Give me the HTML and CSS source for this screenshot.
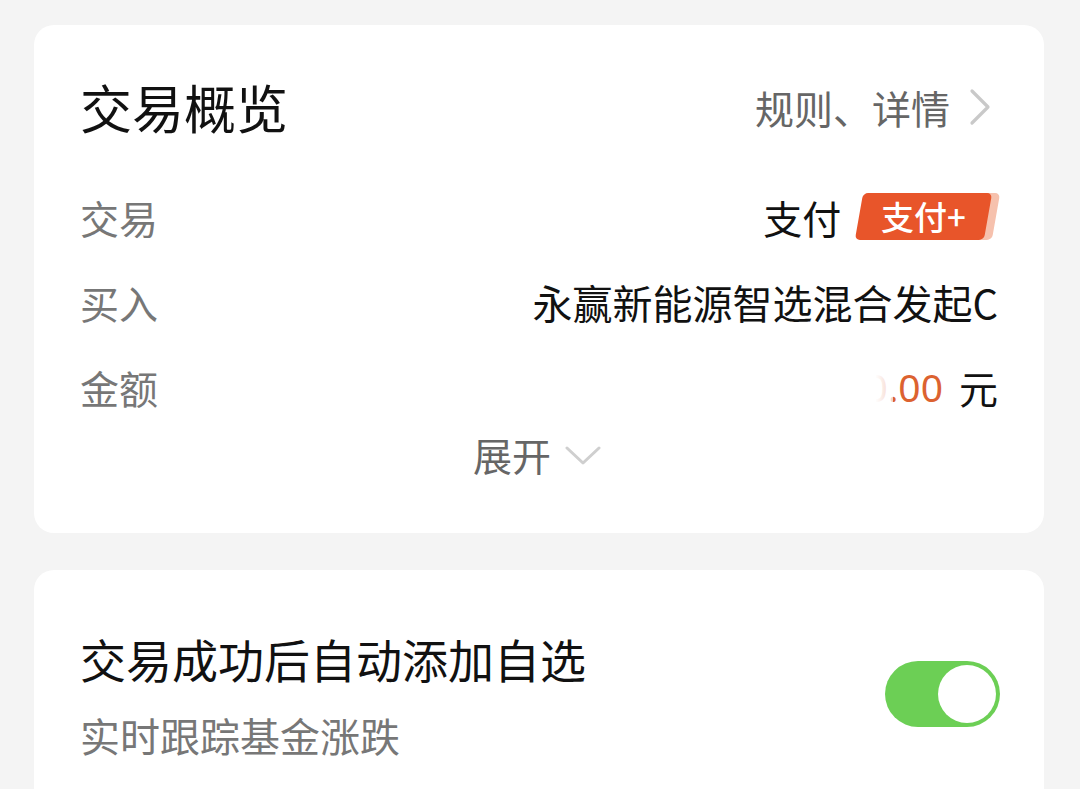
FILE: index.html
```html
<!DOCTYPE html>
<html lang="zh-CN">
<head>
    <meta charset="UTF-8">
    <meta name="viewport" content="width=device-width, initial-scale=1.0">
    <title>交易概览</title>
    <link rel="stylesheet" href="styles.css">
</head>
<body>
    <div class="page">
        <!-- 交易概览 -->
        <section class="card overview">
            <div class="card-head">
                <h1 class="card-title">交易概览</h1>
                <a class="head-link" href="#">规则、详情
                    <svg class="chev-right" viewBox="0 0 24 38" width="24" height="38">
                        <path d="M4 3 L20 19 L4 35" fill="none" stroke="#c9c9c9" stroke-width="3.2" stroke-linecap="round" stroke-linejoin="round"/>
                    </svg>
                </a>
            </div>

            <div class="row">
                <span class="label">交易</span>
                <span class="value">支付 <span class="badge"><span class="badge-text">支付+</span></span></span>
            </div>
            <div class="row">
                <span class="label">买入</span>
                <span class="value name">永赢新能源智选混合发起C</span>
            </div>
            <div class="row">
                <span class="label">金额</span>
                <span class="value"><span class="amount">10.00</span> 元</span>
            </div>

            <div class="expand">展开
                <svg class="chev-down" viewBox="0 0 36 22" width="36" height="22">
                    <path d="M2 3 L18 18 L34 3" fill="none" stroke="#cfcfcf" stroke-width="3" stroke-linecap="round" stroke-linejoin="round"/>
                </svg>
            </div>
        </section>

        <!-- 自动添加自选 -->
        <section class="card setting">
            <div class="setting-text">
                <div class="setting-title">交易成功后自动添加自选</div>
                <div class="setting-sub">实时跟踪基金涨跌</div>
            </div>
            <div class="switch on"><span class="knob"></span></div>
        </section>
    </div>
</body>
</html>
```

FILE: styles.css
```css
* {
    margin: 0;
    padding: 0;
    box-sizing: border-box;
}

body {
    background: #f4f4f4;
    font-family: "Noto Sans CJK SC", "Noto Sans", sans-serif;
    color: #111;
    overflow: hidden;
}

.page {
    padding: 25px 36px 0 34px;
    display: flex;
    flex-direction: column;
    gap: 37px;
}

.card {
    background: #fff;
    border-radius: 20px;
}

/* overview card */
.overview {
    padding: 52px 46px 54px 46px;
    display: flex;
    flex-direction: column;
}

.card-head {
    display: flex;
    justify-content: space-between;
    align-items: center;
    height: 60px;
    margin-bottom: 37px;
}

.card-title {
    font-size: 52px;
    font-weight: 400;
    line-height: 60px;
    color: #111;
}

.head-link {
    display: flex;
    align-items: center;
    gap: 18px;
    font-size: 39px;
    color: #666;
    text-decoration: none;
    margin-right: 6px;
}

.row {
    height: 85px;
    display: flex;
    justify-content: space-between;
    align-items: center;
    font-size: 39px;
}

.label {
    color: #777;
}

.value {
    display: flex;
    align-items: center;
    color: #111;
}

.value.name {
    font-size: 40px;
}

.badge {
    margin-left: 18px;
    display: inline-flex;
    align-items: center;
    height: 47px;
    padding: 0 22px 0 22px;
    background: #e8552a;
    border-radius: 5px;
    transform: skewX(-10deg);
    box-shadow: 8px 0 0 #f6c1ad;
    margin-right: 10px;
}

.badge-text {
    transform: skewX(10deg);
    color: #fff;
    font-size: 33px;
    font-weight: 500;
    line-height: 47px;
}

.amount {
    position: relative;
    color: #dc6230;
    font-family: "Noto Sans", sans-serif;
    margin-right: 16px;
}

.amount::before {
    content: '';
    position: absolute;
    left: 0;
    top: 0;
    bottom: 0;
    width: 50px;
    background: linear-gradient(to right, #fff 65%, rgba(255, 255, 255, 0.7));
}

.expand {
    height: 50px;
    display: flex;
    justify-content: center;
    align-items: center;
    gap: 14px;
    font-size: 39px;
    color: #666;
    margin-right: 4px;
}

.chev-down {
    margin-top: 4px;
}

/* setting card */
.setting {
    height: 260px;
    padding: 58px 44px 0 46px;
    display: flex;
    justify-content: space-between;
    align-items: flex-start;
}

.setting-title {
    font-size: 46px;
    font-weight: 400;
    line-height: 60px;
}

.setting-sub {
    margin-top: 22px;
    font-size: 40px;
    color: #777;
    line-height: 50px;
}

.switch {
    margin-top: 33px;
    width: 115px;
    height: 66px;
    border-radius: 33px;
    background: #6ccf55;
    display: flex;
    align-items: center;
    justify-content: flex-end;
    padding: 4px;
}

.knob {
    width: 58px;
    height: 58px;
    border-radius: 50%;
    background: #fff;
}
```
